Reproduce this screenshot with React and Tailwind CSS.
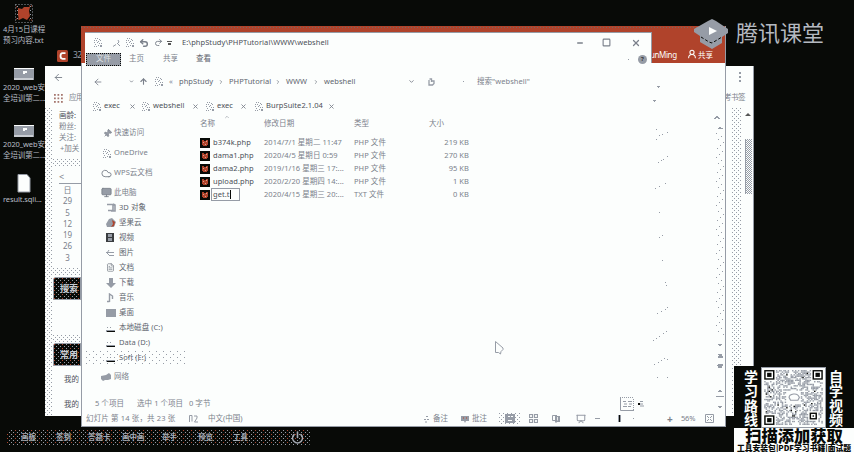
import React from "react";
import {
  ArrowLeft, ArrowUp, ChevronDown, ChevronRight, Cloud, FileText, Monitor,
  Pin, Power, Redo2, Undo2, UserRound, X, Minus, Square, ChevronUp, Presentation,
} from "lucide-react";

const DOTS =
  "bg-[conic-gradient(at_1px_1px,transparent_75%,#969ca6_0),conic-gradient(at_1px_1px,transparent_75%,#969ca6_0)] bg-[length:4px_4px] [background-position:0_0,2px_2px]";
const SPARSE =
  "bg-[conic-gradient(at_1px_1px,transparent_75%,#969ca6_0),conic-gradient(at_1px_1px,transparent_75%,#969ca6_0)] bg-[length:7px_6px] [background-position:1px_1px,4px_4px]";
const DARK_DOTS =
  "bg-[conic-gradient(at_1px_1px,transparent_75%,#b0432b_0),conic-gradient(at_1px_1px,transparent_75%,#969ca6_0),conic-gradient(at_1px_1px,transparent_75%,#969ca6_0)] bg-[length:8px_4px,4px_4px,4px_4px] [background-position:0_0,0_0,2px_2px]";
const CHECKER =
  "bg-[conic-gradient(#969ca6_25%,transparent_0_50%,#969ca6_0_75%,transparent_0)] bg-[length:2px_2px]";

const Cell = ({ w, className = "", children }) => (
  <div className={`flex shrink-0 items-center whitespace-nowrap ${w} ${className}`}>{children}</div>
);

const Folder = ({ className = "" }) => (
  <svg width="9" height="9" viewBox="0 0 9 9" className={`shrink-0 ${className}`} shapeRendering="crispEdges">
    <g fill="#969ca6">
      {["1,0", "3,0", "5,1", "0,2", "2,2", "4,3", "6,2", "0,4", "3,4", "5,5", "1,6", "7,5", "0,8", "2,8", "4,7", "6,7", "7,7", "7,8", "6,8"].map((p) => {
        const [x, y] = p.split(",");
        return <rect key={p} x={x} y={y} width="1" height="1" />;
      })}
    </g>
  </svg>
);

const PhpIcon = () => (
  <svg width="10" height="10" viewBox="0 0 10 10" className="shrink-0" shapeRendering="crispEdges">
    <rect width="10" height="10" fill="#080a07" />
    <path d="M2 2h2v1h2V2h2v5H7v1H3V7H2z" fill="#b0432b" />
    <path d="M3 4h1v1H3zM6 3h1v1H6zM5 6h1v1H5z" fill="#fcfefd" opacity=".5" />
  </svg>
);

function Folder3D() {
  return (
    <svg width="20" height="13" viewBox="0 0 20 13">
      <path d="M0 0h20v12H0z" fill="#969ca6" />
      <path d="M0 0h20v1H0zM0 10.500h19v1H0z" fill="#fcfefd" />
      <path d="M9 3h4v2h-2v1H9z" fill="#fcfefd" />
    </svg>
  );
}

function DesktopItem({ h, icon, lines }) {
  return (
    <div className={`flex w-[48px] flex-col items-center ${h}`}>
      <div className="flex w-full justify-center">{icon}</div>
      <div className="mt-[1px] w-full whitespace-nowrap pl-[3px] text-[7.500px] leading-[11px] tracking-[-0.100px] text-[#b9bec6]">
        {lines.map((l) => <div key={l}>{l}</div>)}
      </div>
    </div>
  );
}

function Desktop() {
  return (
    <div className="flex w-[48px] flex-col pt-[4px]">
      <DesktopItem h="h-[64px]" lines={["4月15日课程", "预习内容.txt"]} icon={
        <svg width="18" height="19" viewBox="0 0 18 19">
          <rect x=".5" y=".5" width="17" height="18" fill="none" stroke="#969ca6" strokeDasharray="1 2" />
          <path d="M2.500 2v15M15.500 2v15" stroke="#969ca6" strokeDasharray="1 3" />
          <path d="M1 3h2M14 2h3M1 15h3M14 16h3" stroke="#b0432b" strokeDasharray="1 1" />
          <path d="M3 4l4 1 2-2h6l-1 4 1 5-3 4-4-2-4 2-1-5z" fill="#b0432b" />
        </svg>} />
      <DesktopItem h="h-[57px]" lines={["2020_web安", "全培训第二..."]} icon={<Folder3D />} />
      <DesktopItem h="h-[49px]" lines={["2020_web安", "全培训第二..."]} icon={<Folder3D />} />
      <DesktopItem h="h-[40px]" lines={["result.sqli..."]} icon={
        <svg width="14" height="19" viewBox="0 0 14 19">
          <path d="M1 .5h9l3 3.500v14H1z" fill="#fcfefd" stroke="#969ca6" />
        </svg>} />
    </div>
  );
}

function Browser() {
  return (
    <div className="absolute left-[45px] top-[45px] flex h-[371px] w-[709px] flex-col text-[7.5px] leading-none text-[#7b818b]">
      <div className="flex h-[21px] items-center pl-[12px]">
        <Cell w="w-[16px]">
          <svg width="11" height="12" viewBox="0 0 11 12">
            <rect width="11" height="12" rx="1.500" fill="#b0432b" />
            <path d="M8.500 3.200H5.500Q3.500 3.400 3.500 6t2 2.800h3" fill="none" stroke="#fcfefd" strokeWidth="1.800" />
          </svg>
        </Cell>
        <span className="text-[8.500px] tracking-[-0.500px] text-[#969ca6]">32</span>
      </div>
      <div className="flex min-h-0 flex-1 flex-col border-r border-[#969ca6] bg-[#fcfefd]">
        <div className="flex h-[22px] items-center justify-between pl-[8px] pr-[12px]">
          <ArrowLeft size={11} />
          <span className="flex flex-col gap-[2px]"><i className="h-[2px] w-[2px] bg-[#969ca6]" /><i className="h-[2px] w-[2px] bg-[#969ca6]" /><i className="h-[2px] w-[2px] bg-[#969ca6]" /></span>
        </div>
        <div className="flex h-[20px] items-center justify-between pl-[9px] pr-[8px]">
          <div className="flex items-center gap-[6px]">
            <div className="h-[9px] w-[9px] bg-[conic-gradient(at_2px_2px,transparent_75%,#a5776f_0)] bg-[length:3.500px_3.500px]" />
            <span className="tracking-[-0.500px]">应用</span>
          </div>
          <span className="tracking-[-0.500px]">考书签</span>
        </div>
        <div className="flex min-h-0 flex-1">
          <div className={`mr-[1px] w-[7px] ${DOTS}`} />
          <div className="flex flex-1 flex-col">
            <div className="flex h-[51px] flex-col pl-[6px] pt-[2px] leading-[11px]">
              <span className="text-[#4b4f57]">画龄:</span>
              <span>粉丝:</span>
              <span>关注:</span>
              <span className="pl-[1px]">+加关</span>
            </div>
            <div className={`h-[7px] w-[28px] ${DOTS}`} />
            <div className="ml-[6px] flex h-[18px] w-[22px] items-center border-b border-[#969ca6] pt-[4px] text-[9px]">&lt;</div>
            <div className="ml-[6px] flex w-[17px] flex-col items-center text-[8px] leading-[11.300px]">
              <span>日</span><span>29</span><span>5</span><span>12</span><span>19</span><span>26</span><span>3</span>
            </div>
            <div className={`mt-[5px] h-[8px] w-[28px] ${DOTS}`} />
            <div className="mt-[1px] flex h-[23px] w-[28px] items-center rounded-tl-[3px] border border-[#969ca6] bg-[#080a07]">
              <div className={`flex h-full w-full items-center whitespace-nowrap pl-[6px] text-[9px] font-bold text-[#c8ccd1] ${DARK_DOTS}`}>搜索</div>
            </div>
            <div className={`mt-[35px] h-[7px] w-[28px] ${DOTS}`} />
            <div className="mt-[1px] flex h-[23px] w-[28px] items-center rounded-tl-[3px] border border-[#969ca6] bg-[#080a07]">
              <div className={`flex h-full w-full items-center whitespace-nowrap pl-[6px] text-[9px] font-bold text-[#c8ccd1] ${DARK_DOTS}`}>常用</div>
            </div>
            <div className="mt-[1px] flex flex-col pl-[11px] leading-[24.500px] text-[#4b4f57]"><span>我的</span><span>我的</span></div>
          </div>
          <div className={`mr-[3px] w-[10px] ${DOTS}`} />
          <div className="flex w-[8px] flex-col pt-[5px]">
            <div className="h-0 w-0 border-x-[3px] border-b-[3px] border-x-transparent border-b-[#555]" />
            <div className={`mt-[23px] h-[55px] w-[7px] border-l border-[#969ca6] ${CHECKER}`} />
          </div>
        </div>
      </div>
    </div>
  );
}

// Faint slide marks and the scroll controls at the slide editor's right edge.
function SlideEdge() {
  const marks = [
    [5, 66], [8, 72], [11, 71], [5, 76], [16, 69], [7, 99], [10, 97], [12, 96], [16, 93], [4, 125], [8, 123], [14, 120],
    [8, 149], [8, 174], [11, 172], [11, 197], [14, 219], [15, 222], [6, 250], [10, 248], [14, 246], [16, 244],
    [2, 277], [5, 275], [8, 273], [12, 270], [15, 268], [3, 301], [7, 299], [10, 297], [13, 295], [16, 296], [6, 314], [16, 314],
  ];
  const rail = Array.from({ length: 68 }, (_, i) => [65 + ((i * 5) % 8), 70 + i * 3]);
  return (
    <svg width="74" height="348" viewBox="0 0 74 348" shapeRendering="crispEdges">
      <g fill="#969ca6">
        {marks.map(([x, y], i) => <rect key={i} x={x} y={y} width="1" height="1" />)}
        {rail.map(([x, y], i) => <rect key={"r" + i} x={x} y={y} width="1" height="1" />)}
        <path d="M6 23h3v1H8v1H7v-1H6zM2 37h3v1H4v1H3v-1H2zM67 65h5v1h-5zM68 64h2v1h-2z" />
        <path d="M67 281h4v1h-1v1h-2v-1h-1zM67 291h4v2h1v2h-5v-2h1zM67 301h5v2h-1v2h-4v-2h-1z" />
        <path d="M67 328h4v1h-4zM68 327h2v1h-2zM65 333h8v1h-8zM67 343h4v1h-1v1h-2v-1h-1z" />
      </g>
      <path d="M63.500 56l2.500-3 2.500 3" fill="none" stroke="#969ca6" strokeWidth="1.200" />
    </svg>
  );
}

function Slides() {
  return (
    <div className="absolute left-[81px] top-[26px] flex h-[401px] w-[645px] flex-col border-b border-r border-[#969ca6] bg-[#fcfefd] text-[7.5px] leading-none text-[#7b818b]">
      <div className="flex h-[37px] shrink-0 flex-col bg-[#b0432b]">
        <div className="mt-[1px] h-px bg-[repeating-linear-gradient(90deg,#7c6660_0_1px,transparent_1px_3px)]" />
        <div className="flex flex-1 items-end justify-end pb-[4px] text-[8px] text-[#fcfefd]">
          <Cell w="w-[37px]" className="tracking-[-0.400px]">unMing</Cell>
          <Cell w="w-[11px]"><UserRound size={10} strokeWidth={2.5} /></Cell>
          <Cell w="w-[27px]" className="text-[7.500px]">共享</Cell>
        </div>
      </div>
      <div className="flex h-[348px] justify-end border-l border-[#969ca6]"><SlideEdge /></div>
      <div className="flex h-[16px] items-center border-l border-[#969ca6] pl-[4px]">
        <Cell w="w-[102px]" className="tracking-[0.150px]">幻灯片 第 14 张，共 23 张</Cell>
        <Cell w="w-[20px]">
          <svg width="11" height="8" viewBox="0 0 11 8" fill="none" stroke="#969ca6"><path d="M4 .5H1.500V7M4 .5v6M6 1h3v2L6.500 7H10" /></svg>
        </Cell>
        <Cell w="w-[216px]">中文(中国)</Cell>
        <Cell w="w-[9px]">
          <svg width="7" height="8" viewBox="0 0 7 8" stroke="#969ca6"><path d="M2 1.500h2M0 4.500h6M1 7h3" strokeDasharray="2 1" /></svg>
        </Cell>
        <Cell w="w-[28px]">备注</Cell>
        <Cell w="w-[11px]">
          <svg width="8" height="8" viewBox="0 0 8 8"><path d="M0 1h8v5H5L4 8 3 6H0z" fill="#969ca6" /><path d="M2 3h1M5 3h1" stroke="#b0432b" /></svg>
        </Cell>
        <Cell w="w-[27px]">批注</Cell>
        <Cell w="w-[30px]">
          <div className={`flex h-[12px] w-[22px] items-center justify-center ${DOTS}`}>
            <svg width="10" height="9" viewBox="0 0 10 9"><path d="M0 0h10v9H0z" fill="#969ca6" /><path d="M3 2.500h2M6 2.500h2M3 6.500h4" stroke="#fcfefd" /></svg>
          </div>
        </Cell>
        <Cell w="w-[23px]">
          <svg width="9" height="9" viewBox="0 0 9 9" fill="none" stroke="#969ca6" strokeWidth="1.200"><path d="M.5.5h3v3h-3zM5.500.5h3v3h-3zM.5 5.500h3v3h-3zM5.500 5.500h3v3h-3z" /></svg>
        </Cell>
        <Cell w="w-[24px]">
          <svg width="9" height="9" viewBox="0 0 9 9"><path d="M.5 1.500h3v5h-3z" fill="none" stroke="#969ca6" /><path d="M3 1h2v1h3v6H5L4 9 3 8z" fill="#969ca6" /><path d="M5.500 3v3.500" stroke="#fcfefd" strokeWidth=".8" /></svg>
        </Cell>
        <Cell w="w-[19px]"><Presentation size={10} strokeWidth={2.5} color="#969ca6" /></Cell>
        <Cell w="w-[23px]"><span className="h-px w-[5px] bg-[#969ca6]" /></Cell>
        <Cell w="w-[49px]"><span className="h-[7px] w-[3px] border-x border-x-[#969ca6] bg-[#080a07]" /><span className="ml-[12px] h-px w-px bg-[#969ca6]" /></Cell>
        <Cell w="w-[14px]" className="text-[10px] font-bold">+</Cell>
        <Cell w="w-[24px]" className="tracking-[-0.200px]">56%</Cell>
        <svg width="9" height="9" viewBox="0 0 9 9" fill="none" stroke="#969ca6"><path d="M.5.5h8v8h-8zM2 2l2 2M7 2L5 4M2 7l2-2M7 7L5 5" /></svg>
      </div>
    </div>
  );
}

const tabs = [
  ["exec", "w-[26px]", "w-[12px]"],
  ["webshell", "w-[40px]", "w-[13px]"],
  ["exec", "w-[24px]", "w-[14px]"],
  ["BurpSuite2.1.04", "w-[63px]", "w-[12px]"],
];

const crumbs = [["phpStudy", "w-[39px]"], ["PHPTutorial", "w-[46px]"], ["WWW", "w-[27px]"]];

const files = [
  ["b374k.php", "2014/7/1 星期二 11:47", "PHP 文件", "219 KB"],
  ["dama1.php", "2020/4/5 星期日 0:59", "PHP 文件", "270 KB"],
  ["dama2.php", "2019/1/16 星期三 17:...", "PHP 文件", "95 KB"],
  ["upload.php", "2020/2/20 星期四 14:...", "PHP 文件", "1 KB"],
  ["get.t", "2020/4/15 星期三 20:...", "TXT 文件", "0 KB"],
];

const drive = (
  <svg width="10" height="8" viewBox="0 0 10 8"><path d="M1 3.500h6" stroke="#969ca6" strokeDasharray="1 2" /><path d="M0 6h9v2H0z" fill="#969ca6" /><path d="M1 7h8v1H1z" fill="#080a07" /></svg>
);

const places = [
  ["3D 对象", <svg width="10" height="9" viewBox="0 0 10 9"><path d="M1 1.500h6v6H2M7 1l2 1v6H5" fill="none" stroke="#969ca6" strokeWidth="1.600" /></svg>],
  ["坚果云", <svg width="10" height="9" viewBox="0 0 10 9"><path d="M0 6l3-5 3-1 4 4-2 5H1z" fill="#969ca6" /><path d="M6 2l3 2-1 4-3 1 2-3z" fill="#b0432b" /></svg>],
  ["视频", <svg width="8" height="9" viewBox="0 0 8 9"><path d="M0 0h8v9H0z" fill="#3a3d40" /><path d="M2 1h4v3H2zM2 5h4v3H2z" fill="#969ca6" /></svg>],
  ["图片", <svg width="9" height="8" viewBox="0 0 9 8" fill="none" stroke="#969ca6"><path d="M0 3.500h8M3 1L1 4l3 3M3 6.500h5" /></svg>],
  ["文档", <FileText size={9} strokeWidth={2} strokeDasharray="3 2" />],
  ["下载", <svg width="10" height="10" viewBox="0 0 10 10"><path d="M3 0h4v5h3L5 10 0 5h3z" fill="#969ca6" /></svg>],
  ["音乐", <svg width="8" height="10" viewBox="0 0 8 10" fill="none" stroke="#969ca6" strokeWidth="1.400"><path d="M3.500 9V1l3 2v3M1 8.500h2.500" /></svg>],
  ["桌面", <svg width="10" height="8" viewBox="0 0 10 8"><path d="M0 0h10v8H0z" fill="#969ca6" /></svg>],
  ["本地磁盘 (C:)", drive],
  ["Data (D:)", drive],
  ["Soft (E:)", drive],
];

function Root({ icon, label, h = "h-[20px]" }) {
  return (
    <div className={`flex shrink-0 items-center pl-[16px] ${h}`}>
      <Cell w="w-[13px]">{icon}</Cell>
      <span className="whitespace-nowrap">{label}</span>
    </div>
  );
}

function Sidebar() {
  return (
    <div className="flex w-[115px] shrink-0 flex-col pt-[7px]">
      <Root icon={<Pin size={9} fill="#969ca6" className="ml-[2px] rotate-45" />} label="快速访问" />
      <Root icon={<Folder className="ml-[2px]" />} label="OneDrive" />
      <Root icon={<Cloud size={11} />} label="WPS云文档" />
      <Root h="h-[17px] pt-[2px]" icon={<Monitor size={11} fill="#969ca6" />} label="此电脑" />
      {places.map(([label, icon], i) => (
        <div key={label} className={`mr-[14px] flex h-[15px] shrink-0 items-center whitespace-nowrap pl-[21px] ${i === 10 ? SPARSE : ""}`}>
          <Cell w="w-[13px]">{icon}</Cell>
          <span className="text-[#60656e]">{label}</span>
        </div>
      ))}
      <Root h="h-[23px]" label="网络" icon={
        <svg width="10" height="8" viewBox="0 0 10 8"><path d="M0 3l5-1 3-2 2 2v4L7 7H4L2 8 0 6z" fill="#969ca6" /></svg>} />
    </div>
  );
}

function Explorer() {
  return (
    <div className="absolute left-[85px] top-[32px] flex h-[379px] w-[567px] flex-col text-[7.5px] leading-none tracking-[0.060px] text-[#7b818b]">
      <div className="flex h-[31px] shrink-0 flex-col border-r border-t border-[#969ca6] bg-[#fcfefd]">
        <div className="flex h-[19px] shrink-0 items-center pl-[9px]">
          <Cell w="w-[19px]"><Folder /></Cell>
          <Cell w="w-[13px]"><svg width="8" height="8" viewBox="0 0 8 8" fill="none" stroke="#969ca6"><path d="M5 1l1 2-2 2M0 7.500l3-2M5 5l2 2" /></svg></Cell>
          <Cell w="w-[13px]"><Folder /></Cell>
          <Cell w="w-[15px]"><Undo2 size={10} strokeWidth={3.5} /></Cell>
          <Cell w="w-[13px]"><Redo2 size={9} strokeWidth={2.5} /></Cell>
          <Cell w="w-[15px]"><span className="flex w-[5px] flex-col items-center gap-[1px]"><i className="h-px w-full bg-[#555]" /><i className="h-[2px] w-[3px] bg-[#555]" /></span></Cell>
          <Cell w="w-[394px]" className="text-[#4b4f57]">E:\phpStudy\PHPTutorial\WWW\webshell</Cell>
          <Cell w="w-[26px]"><Minus size={8} strokeWidth={4} /></Cell>
          <Cell w="w-[29px]"><Square size={9} strokeWidth={3} /></Cell>
          <X size={10} strokeWidth={3} className="shrink-0" />
        </div>
        <div className="flex h-[14px] shrink-0 items-center">
          <Cell w="w-[44px]">
            <div className="ml-[1px] flex h-[13px] w-[35px] items-center justify-center border border-dotted border-[#080a07] bg-[#969ca6] text-[#dfe2e5]">文件</div>
          </Cell>
          <Cell w="w-[34px]">主页</Cell>
          <Cell w="w-[33px]">共享</Cell>
          <Cell w="w-[432px]" className="text-[#60656e]">查看</Cell>
          <Cell w="w-[10px]"><span className="h-px w-px bg-[#969ca6]" /></Cell>
          <span className="flex h-[9px] w-[9px] shrink-0 items-center justify-center rounded-full bg-[#969ca6] text-[6px] font-bold text-[#333]">?</span>
        </div>
      </div>
      <div className="flex h-[33px] shrink-0 items-center pl-[8px] pt-[4px]">
        <Cell w="w-[36px]"><ArrowLeft size={10} /></Cell>
        <Cell w="w-[10px]"><ChevronDown size={5} strokeWidth={4} /></Cell>
        <Cell w="w-[16px]"><ArrowUp size={9} strokeWidth={3} /></Cell>
        <Cell w="w-[14px]"><Folder /></Cell>
        <Cell w="w-[10px]">«</Cell>
        {crumbs.map(([name, w]) => (
          <React.Fragment key={name}>
            <Cell w={w} className="text-[#60656e]">{name}</Cell>
            <Cell w="w-[11px]"><ChevronRight size={6} strokeWidth={3} /></Cell>
          </React.Fragment>
        ))}
        <Cell w="w-[84px]" className="text-[#60656e]">webshell</Cell>
        <Cell w="w-[20px]"><ChevronDown size={7} strokeWidth={3} /></Cell>
        <Cell w="w-[35px]">
          <svg width="7" height="8" viewBox="0 0 7 8" fill="none" stroke="#969ca6" strokeWidth="1.300"><path d="M1 2v5h3.500L6 5.500V3H3M1.500 1h2v3" /></svg>
        </Cell>
        <Cell w="w-[14px]"><span className="h-px w-px bg-[#969ca6]" /></Cell>
        <Cell w="w-[60px]">搜索"webshell"</Cell>
      </div>
      <div className="flex h-[20px] shrink-0 items-center pl-[8px]">
        {tabs.map(([name, w, gap], i) => (
          <React.Fragment key={i}>
            <Cell w="w-[11px]"><Folder /></Cell>
            <Cell w={w} className="text-[#4b4f57]">{name}</Cell>
            <Cell w={gap}><X size={7} strokeWidth={3} className="-ml-[1px]" /></Cell>
          </React.Fragment>
        ))}
      </div>
      <div className="flex h-[279px] shrink-0">
        <Sidebar />
        <div className="flex w-[300px] flex-col">
          <div className="flex h-[16px] items-center">
            <Cell w="w-[24px]">名称</Cell>
            <Cell w="w-[40px]" className="h-full items-start"><ChevronUp size={6} className="-mt-[2px]" /></Cell>
            <Cell w="w-[90px]">修改日期</Cell>
            <Cell w="w-[75px]">类型</Cell>
            <Cell w="w-[30px]">大小</Cell>
          </div>
          <div className="flex flex-col pt-[4px]">
            {files.map(([name, date, type, size], i) => (
              <div key={name} className="flex h-[13.100px] items-center">
                <Cell w="w-[13px]"><PhpIcon /></Cell>
                <Cell w="w-[51px]" className="text-[#4b4f57]">
                  {i === 4 ? (
                    <span className="-ml-[2px] flex h-[13px] w-[29px] items-center border border-[#969ca6] bg-[#fcfefd] pl-[1px]">
                      {name}<span className="h-[9px] w-px bg-[#080a07]" />
                    </span>
                  ) : name}
                </Cell>
                <Cell w="w-[90px]">{date}</Cell>
                <Cell w="w-[75px]">{type}</Cell>
                <Cell w="w-[40px]" className="justify-end">{size}</Cell>
              </div>
            ))}
          </div>
        </div>
      </div>
      <div className="flex h-[16px] shrink-0 items-center pl-[10px] pt-[1px]">
        <Cell w="w-[42px]">5 个项目</Cell>
        <Cell w="w-[52px]">选中 1 个项目</Cell>
        <Cell w="w-[431px]">0 字节</Cell>
        <Cell w="w-[18px]">
          <svg width="14" height="14" viewBox="0 0 14 14" fill="none" stroke="#969ca6">
            <path d="M.5 0v13.500H14" /><path d="M2 .5h12M13.500 2v11" strokeDasharray="1 1" />
            <path d="M3 4.500h3M8 4.500h4M4 7h3M9 7h3M3 9.500h4M8 9.500h3" />
          </svg>
        </Cell>
        <svg width="6" height="6" viewBox="0 0 6 6"><path d="M0 3h5M2 .5h3M2 5h4" stroke="#969ca6" /><path d="M0 2h2v2H0z" fill="#080a07" /></svg>
      </div>
    </div>
  );
}

function Brand() {
  return (
    <div className="absolute left-[694px] top-[17px] flex h-[33px] items-center gap-[7px]">
      <svg width="35" height="32" viewBox="0 0 35 32">
        <path d="M14 3l4-2 4 2 12 8v4l-6 4v6l-10 6-12-7v-6L0 14v-3z" fill="#969ca6" />
        <path d="M7 19l8 5 3 1 10-6" fill="none" stroke="#080a07" strokeDasharray="3 2" />
        <path d="M15 9l8 4-8 4z" fill="#fcfefd" />
      </svg>
      <span className="-mt-[4px] whitespace-nowrap text-[22px] leading-none text-[#b4b9c0]">腾讯课堂</span>
    </div>
  );
}

const tools = [["画板", "w-[35px]"], ["签到", "w-[32px]"], ["答题卡", "w-[34px]"], ["画中画", "w-[40px]"], ["举手", "w-[36px]"], ["预览", "w-[35px]"], ["工具", "w-[59px]"]];

function Toolbar() {
  return (
    <div className={`absolute left-[7px] top-[430px] flex h-[16px] w-[303px] items-center rounded-[3px] pb-[1px] pl-[14px] text-[7.5px] font-bold leading-none text-[#a4a9b2] ${DARK_DOTS}`}>
      {tools.map(([label, w]) => <Cell key={label} w={w}>{label}</Cell>)}
      <Power size={13} strokeWidth={3} className="-ml-[1px] shrink-0" />
    </div>
  );
}

function Pointer() {
  return (
    <svg width="9" height="14" viewBox="0 0 9 14" className="absolute left-[495px] top-[341px]">
      <path d="M.5.5v11h3l2 1.500.5-2.500 2-2V7z" fill="#fcfefd" stroke="#969ca6" />
    </svg>
  );
}

const N = 40;
const modules = [];
let seed = 77;
for (let y = 0; y < N; y++) {
  for (let x = 0; x < N; x++) {
    seed = (seed * 1103515 + 12345) % 2147483648;
    const corner = (x < 8 && y < 8) || (x > 31 && y < 8) || (x < 8 && y > 31) || (x > 29 && x < 37 && y > 29 && y < 37);
    const middle = x > 14 && x < 25 && y > 14 && y < 25;
    if (!corner && !middle && seed / 2147483648 < 0.52) modules.push([x, y, seed % 41 === 0]);
  }
}

function Finder({ x, y, s = 7 }) {
  return (
    <g>
      <rect x={x} y={y} width={s} height={s} fill="#080a07" />
      <rect x={x + 1} y={y + 1} width={s - 2} height={s - 2} fill="#fcfefd" />
      <rect x={x + 2} y={y + 2} width={s - 4} height={s - 4} fill="#080a07" />
    </g>
  );
}

function Vertical({ text, w }) {
  return (
    <div className={`flex flex-col items-center text-[14px] font-bold leading-[14.400px] text-[#fcfefd] ${w}`}>
      {[...text].map((c) => <span key={c}>{c}</span>)}
    </div>
  );
}

function QrPanel() {
  return (
    <div className="absolute left-[734px] top-[366px] flex h-[86px] w-[120px] flex-col bg-[#080a07] font-['Noto_Sans_CJK_SC',sans-serif]">
      <div className="flex h-[62px] shrink-0 pt-[1px]">
        <div className="pt-[2px]"><Vertical text="学习路线" w="w-[27px] pl-[7px]" /></div>
        <svg width="65" height="61" viewBox="-1.500 -1.500 43 43" preserveAspectRatio="none" className="shrink-0 border border-[#969ca6] bg-[#fcfefd]">
          {modules.map(([x, y, dark]) => <rect key={x + "-" + y} x={x} y={y} width="1" height="1" fill={dark ? "#080a07" : "#969ca6"} />)}
          <Finder x={0} y={0} /><Finder x={33} y={0} /><Finder x={0} y={33} /><Finder x={31} y={31} s={5} />
          <path d="M17 20q0-2 3-2.500t4 2.500l-1 2h-5z" fill="none" stroke="#969ca6" strokeWidth=".8" />
        </svg>
        <div className="pt-[2px]"><Vertical text="自学视频" w="w-[20px]" /></div>
      </div>
      <div className="flex flex-1 flex-col items-center bg-[#fcfefd] font-black text-[#080a07]">
        <span className="whitespace-nowrap text-[16.300px] leading-[15px]">扫描添加获取</span>
        <span className="whitespace-nowrap text-[7.800px] leading-[9px]">工具安装包|PDF学习书籍|面试题</span>
      </div>
    </div>
  );
}

export default function App() {
  return (
    <div className="relative h-[452px] w-[854px] overflow-hidden bg-[#080a07] font-['Noto_Sans','Noto_Sans_CJK_SC',sans-serif]">
      <Desktop />
      <Browser />
      <Slides />
      <Explorer />
      <Pointer />
      <Brand />
      <Toolbar />
      <QrPanel />
    </div>
  );
}
